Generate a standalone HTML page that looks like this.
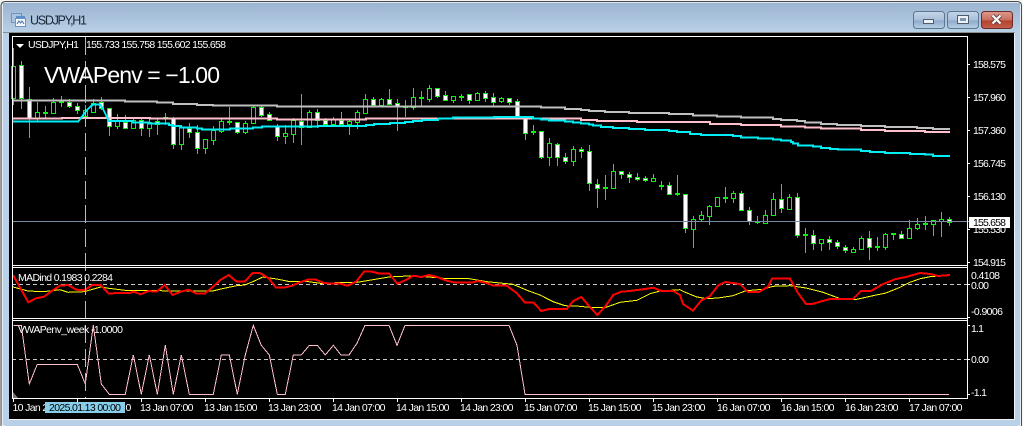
<!DOCTYPE html>
<html><head><meta charset="utf-8"><title>USDJPY,H1</title>
<style>
html,body{margin:0;padding:0;background:#fff;width:1023px;height:426px;overflow:hidden}
svg{display:block;font-family:"Liberation Sans",sans-serif}
.t{fill:#fff;font-size:10.5px}
.a{fill:#fff;font-size:10.5px;letter-spacing:-.66px}
.c path,.l{shape-rendering:crispEdges}
</style></head><body>
<svg width="1023" height="426" viewBox="0 0 1023 426" xmlns="http://www.w3.org/2000/svg">
<defs>
<linearGradient id="tb" x1="0" y1="0" x2="0" y2="1"><stop offset="0" stop-color="#9cb4d0"/><stop offset="1" stop-color="#b7d0e6"/></linearGradient>
<linearGradient id="bb" x1="0" y1="0" x2="0" y2="1"><stop offset="0" stop-color="#c4d6e8"/><stop offset=".5" stop-color="#a9c0da"/><stop offset=".55" stop-color="#8fabca"/><stop offset="1" stop-color="#b8d0e6"/></linearGradient>
<linearGradient id="rb" x1="0" y1="0" x2="0" y2="1"><stop offset="0" stop-color="#dc9a8c"/><stop offset=".5" stop-color="#c8705e"/><stop offset=".55" stop-color="#b3422e"/><stop offset="1" stop-color="#c2604c"/></linearGradient>
</defs>
<rect width="1023" height="426" fill="#f4f4f4"/>
<rect x="1" y="1" width="1021" height="425" rx="5" fill="#b9d1e8"/>
<path d="M1 426V6Q1 1.500 6 1.500H1017Q1021.500 1.500 1021.500 6V426" fill="none" stroke="#4a4a4a" stroke-width="1"/>
<path d="M2.500 426V6Q2.500 2.700 6 2.700H1017Q1020.500 2.700 1020.500 6V426" fill="none" stroke="#e8eef4" stroke-width="1"/>
<rect x="3" y="3" width="1017" height="29" fill="url(#tb)"/>
<rect x="3" y="32" width="1012" height="1" fill="#8a8f94"/>
<rect x="9" y="33" width="1005" height="386" fill="#000"/>
<rect x="1014" y="33" width="1" height="387" fill="#f0f4f8"/>
<rect x="9" y="419" width="1006" height="1" fill="#f0f4f8"/>
<!-- window icon -->
<g>
<rect x="11.500" y="13.500" width="10" height="9" fill="#a8c4e0" stroke="#6d94bd"/>
<rect x="15.500" y="18.500" width="10" height="8" fill="#f4f8fc" stroke="#6d94bd"/>
<rect x="16" y="16" width="9" height="2.500" fill="#5e8fc4"/>
<path d="M17 24l2-3 1.500 2 1.500-2 2 3" fill="none" stroke="#3d6ea8" stroke-width="1"/>
</g>
<text x="30" y="24.500" font-size="12.5" fill="#1a2a3a" textLength="57">USDJPY,H1</text>
<!-- buttons -->
<rect x="913.500" y="11.500" width="31" height="17" rx="3" fill="url(#bb)" stroke="#5f7690"/>
<rect x="947.500" y="11.500" width="31" height="17" rx="3" fill="url(#bb)" stroke="#5f7690"/>
<rect x="981.500" y="11.500" width="31" height="17" rx="3" fill="url(#rb)" stroke="#6b2a2a"/>
<rect x="923.500" y="19.500" width="10" height="4" fill="#eef2f6" stroke="#4d5e70"/>
<rect x="957.500" y="15.500" width="11" height="8" fill="#eef2f6" stroke="#4d5e70"/>
<rect x="960" y="18" width="6" height="3" fill="#7f95ad"/>
<path d="M992.500 15.500l8 8M1000.500 15.500l-8 8" stroke="#4a2a2a" stroke-width="4"/>
<path d="M992.500 15.500l8 8M1000.500 15.500l-8 8" stroke="#f4f4f4" stroke-width="2.400"/>
<!-- candles -->
<g class="c">
<path fill="none" stroke="#10f010" stroke-width="1" d="M13.500 48V105M21.500 61V109M29.500 87V138M37.500 102V122M45.500 106V118M53.500 98V113M61.500 96V107M69.500 99V108M77.500 103V114M85.500 105V127M93.500 99V113M101.500 97V110M109.500 108V136M117.500 114V129M125.500 115V129M133.500 117V128M141.500 118V136M149.500 118V137M157.500 118V135M165.500 113V125M173.500 117V149M181.500 125V150M189.500 123V138M197.500 125V154M205.500 139V154M213.500 126V145M221.500 118V133M229.500 107V125M237.500 122V134M245.500 121V134M253.500 106V123M261.500 105V117M269.500 112V121M277.500 124V141M285.500 125V144M293.500 118V143M301.500 94V145M309.500 110V127M317.500 109V128M325.500 118V125M333.500 117V125M341.500 112V126M349.500 120V135M357.500 110V129M365.500 94V114M373.500 97V106M381.500 98V105M389.500 89V105M397.500 99V131M405.500 100V117M413.500 88V110M421.500 91V107M429.500 85V102M437.500 88V98M445.500 91V101M453.500 96V103M461.500 94V101M469.500 94V104M477.500 92V101M485.500 91V102M493.500 93V106M501.500 97V103M509.500 98V105M517.500 99V118M525.500 118V140M533.500 125V135M541.500 131V159M549.500 138V166M557.500 143V166M565.500 153V164M573.500 146V166M581.500 147V158M589.500 145V191M597.500 179V208M605.500 175V200M613.500 164V188M621.500 171V179M629.500 172V183M637.500 173V181M645.500 176V182M653.500 174V181M661.500 181V190M669.500 182V194M677.500 175V196M685.500 194V233M693.500 216V248M701.500 211V222M709.500 205V225M717.500 197V206M725.500 187V203M733.500 191V203M741.500 191V211M749.500 207V225M757.500 216V224M765.500 210V223M773.500 193V215M781.500 184V213M789.500 194V209M797.500 193V238M805.500 228V253M813.500 230V250M821.500 239V251M829.500 236V250M837.500 240V249M845.500 245V253M853.500 247V253M861.500 236V250M869.500 231V260M877.500 237V251M885.500 233V250M893.500 234V240M901.500 231V239M909.500 220V239M917.500 218V230M925.500 216V230M933.500 220V236M941.500 212V237M949.500 217V226"/>
<path fill="none" stroke="#10f010" stroke-width="2" d="M43 113h5M59 102h5M163 118h5M227 122h5M403 107h5M419 98h5M459 97h5M531 132h5M603 188h5M659 186h5M675 194h5M723 198h5M755 222h5M803 235h5M875 247h5M891 234h5M923 224h5"/>
<path fill="#000" stroke="#10f010" stroke-width="1" d="M11.500 66.500h4v32h-4zM35.500 112.500h4v6h-4zM51.500 102.500h4v11h-4zM83.500 110.500h4v6h-4zM91.500 103.500h4v9h-4zM115.500 121.500h4v5h-4zM131.500 120.500h4v8h-4zM147.500 122.500h4v6h-4zM179.500 127.500h4v17h-4zM203.500 139.500h4v9h-4zM211.500 130.500h4v10h-4zM219.500 121.500h4v10h-4zM243.500 123.500h4v9h-4zM251.500 107.500h4v16h-4zM283.500 133.500h4v3h-4zM291.500 120.500h4v14h-4zM307.500 112.500h4v15h-4zM331.500 119.500h4v5h-4zM347.500 121.500h4v3h-4zM355.500 112.500h4v10h-4zM363.500 99.500h4v14h-4zM379.500 99.500h4v6h-4zM411.500 97.500h4v10h-4zM427.500 88.500h4v11h-4zM451.500 96.500h4v4h-4zM475.500 93.500h4v7h-4zM499.500 98.500h4v3h-4zM547.500 143.500h4v14h-4zM571.500 149.500h4v12h-4zM611.500 171.500h4v17h-4zM651.500 178.500h4v3h-4zM691.500 219.500h4v10h-4zM699.500 215.500h4v4h-4zM707.500 206.500h4v10h-4zM715.500 197.500h4v9h-4zM731.500 193.500h4v5h-4zM763.500 215.500h4v8h-4zM771.500 199.500h4v16h-4zM787.500 197.500h4v12h-4zM819.500 239.500h4v4h-4zM851.500 249.500h4v3h-4zM859.500 238.500h4v11h-4zM883.500 234.500h4v13h-4zM907.500 228.500h4v10h-4zM915.500 224.500h4v4h-4zM931.500 220.500h4v4h-4zM939.500 219.500h4v2h-4z"/>
<path fill="#fff" stroke="#10f010" stroke-width="1" d="M19.500 65.500h4v33h-4zM27.500 99.500h4v19h-4zM67.500 102.500h4v4h-4zM75.500 106.500h4v4h-4zM99.500 102.500h4v6h-4zM107.500 108.500h4v18h-4zM123.500 122.500h4v6h-4zM139.500 120.500h4v8h-4zM155.500 121.500h4v3h-4zM171.500 118.500h4v26h-4zM187.500 128.500h4v4h-4zM195.500 132.500h4v16h-4zM235.500 122.500h4v10h-4zM259.500 107.500h4v8h-4zM267.500 114.500h4v6h-4zM275.500 126.500h4v10h-4zM299.500 121.500h4v6h-4zM315.500 112.500h4v8h-4zM323.500 120.500h4v4h-4zM339.500 120.500h4v4h-4zM371.500 99.500h4v6h-4zM387.500 99.500h4v5h-4zM395.500 103.500h4v3h-4zM435.500 88.500h4v8h-4zM443.500 95.500h4v5h-4zM467.500 94.500h4v6h-4zM483.500 93.500h4v5h-4zM491.500 97.500h4v5h-4zM507.500 98.500h4v4h-4zM515.500 101.500h4v16h-4zM523.500 118.500h4v15h-4zM539.500 131.500h4v26h-4zM555.500 144.500h4v13h-4zM563.500 157.500h4v4h-4zM579.500 149.500h4v2h-4zM587.500 151.500h4v32h-4zM595.500 184.500h4v4h-4zM619.500 171.500h4v3h-4zM627.500 174.500h4v3h-4zM635.500 177.500h4v2h-4zM643.500 178.500h4v2h-4zM667.500 185.500h4v9h-4zM683.500 194.500h4v34h-4zM739.500 193.500h4v17h-4zM747.500 210.500h4v11h-4zM779.500 199.500h4v9h-4zM795.500 197.500h4v38h-4zM811.500 235.500h4v8h-4zM827.500 239.500h4v3h-4zM835.500 242.500h4v4h-4zM843.500 247.500h4v3h-4zM867.500 238.500h4v9h-4zM899.500 234.500h4v4h-4zM947.500 219.500h4v3h-4z"/>
</g>
<!-- price line -->
<rect x="12" y="221" width="957" height="1" fill="#7a8ba3"/>
<!-- moving averages -->
<path class="l" fill="none" stroke="#c0c0c0" stroke-width="2" d="M13 100.500H125V101.700H157V102.700H173V104H197V105H213V105.700H277V106.700H541V107.700H565V109H581V110H589V111H605V112H629V113H669V114H693V115.700H717V116.700H741V117.700H773V119H781V120H797V121H805V122.700H821V124H837V125H861V126H885V127H917V128H933V129H950"/>
<path class="l" fill="none" stroke="#ffc0cb" stroke-width="2" d="M13 118.700H62V118H150V118.700H253V118.300H277V119.700H366V118.700H581V120H597V121H637V122H710V124H741V125H781V126.700H805V127.700H821V128.700H861V130H885V131H925V132H950"/>
<path class="l" fill="none" stroke="#00eef4" stroke-width="2" d="M13 121.700H78L81 118L84 114L87 110L90 107L93 104.500H100L103 109L106 115L109 121H133V122.700H149V123.700H169V125H173V126H181V127.300H197V128.700H202V129.700H230V128.700H253V127.700H262V126.700H318V126H366V125H374V124H390V123H405V122H413V121H422V120H438V118.700H453V117.700H494V117H533V118.300H541V119.300H549V120.300H565V121.300H573V122.300H581V123.300H589V124.300H593V125.300H601V127H613V128H629V129H645V130H669V131H677V132H690V134H701V135H733V136H741V137.300H758V138.300H773V139.300H781V140.700H791V142H793V143.700H798V145.300H813V146.700H821V148H830V149H838V149.700H861V151H870V152H885V153H910V154H925V154.700H933V156H950"/>
<!-- MADind -->
<line class="l" x1="12" y1="284.500" x2="967" y2="284.500" stroke="#c8c8c8" stroke-width="1" stroke-dasharray="4 3"/>
<path class="l" fill="none" stroke="#ffff00" stroke-width="1" d="M13 287L28 291L43 291.700L60 289.700L68 292.300L84 291.700L100.700 287L108.700 288.300L125 290.300L156.700 290.300L164.700 291L180.700 291L212.700 291L220.700 289L236.700 285.700L244.700 285L252.700 281.700L263 277L276.700 279L290 281.700L308.700 281.700L323 283.700L340 282.300L357 282.300L373 279.700L389 277L413 275.700L437 277.700L443 278.300L467 278.300L487 281.700L513 284.300L527 290.300L540 295L553 301.700L565 305.700L580 306.300L593 307.700L605 307.700L620 302.300L637 300.300L650 293.700L660 291L680 289.700L683 291.300L696 296.700L706 298.700L718 298L733 295.700L746 290.700L763 289.300L773 286.300L790 285.700L806 288L823 292.300L843 299.700L855 299.700L873 295.700L886 293L900 287.300L910 282.300L920 278.700L930 276.700L950 275"/>
<path class="l" fill="none" stroke="#ff0000" stroke-width="2" d="M13 275L28.300 302.300L36 298.300L44 296.700L51.700 291L60 285.700L68.300 285L76 289.700L84 290.300L92.700 285L100.700 285L108.700 293.700L116 293L129.300 293L134 291.700L140.700 294.300L148.700 291L156.700 291.700L164.700 285L172.700 295L180.700 291.700L188.700 289.700L196.700 293.700L204.700 293.700L212.700 287L220.700 279.700L228.700 275L236.700 281.700L244.700 281.700L252.700 273L260 273L268.700 278.300L276 287.700L284 287.700L292 285.700L300 282.300L308 279.700L316 279.700L324 283L332 283.700L340 283.700L348 285.700L356 281.700L364 271.700L372 271.700L380 273.700L389.300 273.700L397.300 283.700L405.300 280.300L413.300 275.700L421.300 277L429.300 275L437.300 277L445.300 280.300L453.300 282.300L473.300 282.300L477.300 281L486.700 283L493.300 285.700L506.700 285.700L516.700 293L524.700 302.300L533.300 302.300L541.300 311L549.300 309L566.700 309L573.300 301L581.300 297L589.300 306.300L597.300 315L605.300 306.300L613.300 295L621.300 291.700L629.300 291L645.300 289L653.300 287.700L661.300 291L673.300 291L680 295L683 304L693 310.700L701 300.700L710 296L718 285.700L725 282L740 284L748 292L759 292L768 286.700L772 278.700L790 278.700L798 293L806 304L812 304L830 299L853 299L861 291L871 291L883 284L896 279L906 277L920 273L930 274L938 276L950 275"/>
<!-- VWAP -->
<line class="l" x1="12" y1="359.500" x2="967" y2="359.500" stroke="#c8c8c8" stroke-width="1" stroke-dasharray="4 3"/>
<path class="l" fill="none" stroke="#ffc0cb" stroke-width="1" d="M13.300 325.300H21.300L29.300 384L37.300 364.300H77.300L85.300 384L93.300 325.300L101.300 384L109.300 394.300H125.300L133.300 355L141.300 394.300L149.300 355L157.300 394.300L165.300 345.300L173.300 394.300L181.300 355L189.300 394.300H213.300L221.300 355H229.300L237.300 394.300L245.300 355L253.300 325.300L261.300 345.300L269.300 355L277.300 394.300H285.300L293.300 355H301.300L309.300 345.300H317.300L325.300 355L333.300 345.300L341 355H349L357 343.300L365 325.300H389L397 345.300L405 325.300H509L517 345.300L525 394.300H949"/>
<!-- crosshair -->
<line class="l" x1="85.500" y1="37" x2="85.500" y2="398" stroke="#87ceeb" stroke-width="1" stroke-dasharray="18 6"/>
<!-- frames -->
<g fill="#fff" shape-rendering="crispEdges">
<rect x="12" y="36" width="956" height="1"/>
<rect x="12" y="36" width="1" height="363"/>
<rect x="967" y="36" width="1" height="363"/>
<rect x="12" y="265" width="956" height="1"/>
<rect x="12" y="267" width="956" height="1"/>
<rect x="12" y="318" width="956" height="1"/>
<rect x="12" y="320" width="956" height="1"/>
<rect x="12" y="398" width="956" height="1"/>
<path d="M968 64h2v1h-2zM968 97h2v1h-2zM968 130h2v1h-2zM968 163h2v1h-2zM968 196h2v1h-2zM968 229h2v1h-2zM968 262h2v1h-2zM968 284h2v1h-2zM968 317h2v1h-2zM968 325h2v1h-2zM968 359h2v1h-2zM968 394h2v1h-2z"/>
<path d="M13 399h1v3h-1zM77 399h1v3h-1zM141 399h1v3h-1zM205 399h1v3h-1zM269 399h1v3h-1zM333 399h1v3h-1zM397 399h1v3h-1zM461 399h1v3h-1zM525 399h1v3h-1zM589 399h1v3h-1zM653 399h1v3h-1zM717 399h1v3h-1zM781 399h1v3h-1zM845 399h1v3h-1zM909 399h1v3h-1z"/>
</g>
<path d="M13 392L18 398H13Z" fill="#777"/>
<!-- header text -->
<path d="M16 44H24L20 48Z" fill="#fff"/>
<text class="t" x="28" y="48" textLength="51">USDJPY,H1</text>
<text class="t" x="86" y="48" textLength="140">155.733 155.758 155.602 155.658</text>
<text x="44" y="83" font-size="23" fill="#fff" textLength="176">VWAPenv = −1.00</text>
<text class="t" x="18" y="281" textLength="95">MADind 0.1983 0.2284</text>
<text class="t" x="18" y="333" textLength="105">VWAPenv_week -1.0000</text>
<!-- right axis -->
<g class="t">
<text x="973" y="68" textLength="33">158.575</text>
<text x="973" y="101" textLength="33">157.960</text>
<text x="973" y="134" textLength="33">157.360</text>
<text x="973" y="167" textLength="33">156.745</text>
<text x="973" y="200" textLength="33">156.130</text>
<text x="973" y="233" textLength="33">155.530</text>
<text x="973" y="266" textLength="33">154.915</text>
<text x="971" y="279" textLength="29">0.4108</text>
<text x="971" y="289" textLength="18">0.00</text>
<text x="971" y="315" textLength="32">-0.9006</text>
<text x="971" y="332" textLength="13">1.1</text>
<text x="971" y="363" textLength="18">0.00</text>
<text x="971" y="396" textLength="16">-1.1</text>
</g>
<rect x="969" y="217" width="41" height="11" fill="#fff"/>
<text x="973" y="226" font-size="10.5" fill="#000" textLength="33">155.658</text>
<!-- bottom axis -->
<g class="a">
<text x="12.500" y="411">10 Jan 2025 00:00</text>
</g>
<rect x="45" y="402" width="80" height="11" fill="#87ceeb"/>
<text x="49" y="411" font-size="10.5" fill="#000" textLength="72">2025.01.13 00:00</text>
<g class="a">
<text x="125.500" y="411">0</text>
<text x="140" y="411">13 Jan 07:00</text>
<text x="204" y="411">13 Jan 15:00</text>
<text x="268" y="411">13 Jan 23:00</text>
<text x="332" y="411">14 Jan 07:00</text>
<text x="396" y="411">14 Jan 15:00</text>
<text x="460" y="411">14 Jan 23:00</text>
<text x="524" y="411">15 Jan 07:00</text>
<text x="588" y="411">15 Jan 15:00</text>
<text x="652" y="411">15 Jan 23:00</text>
<text x="717" y="411">16 Jan 07:00</text>
<text x="781" y="411">16 Jan 15:00</text>
<text x="845" y="411">16 Jan 23:00</text>
<text x="909" y="411">17 Jan 07:00</text>
</g>
</svg>
</body></html>
